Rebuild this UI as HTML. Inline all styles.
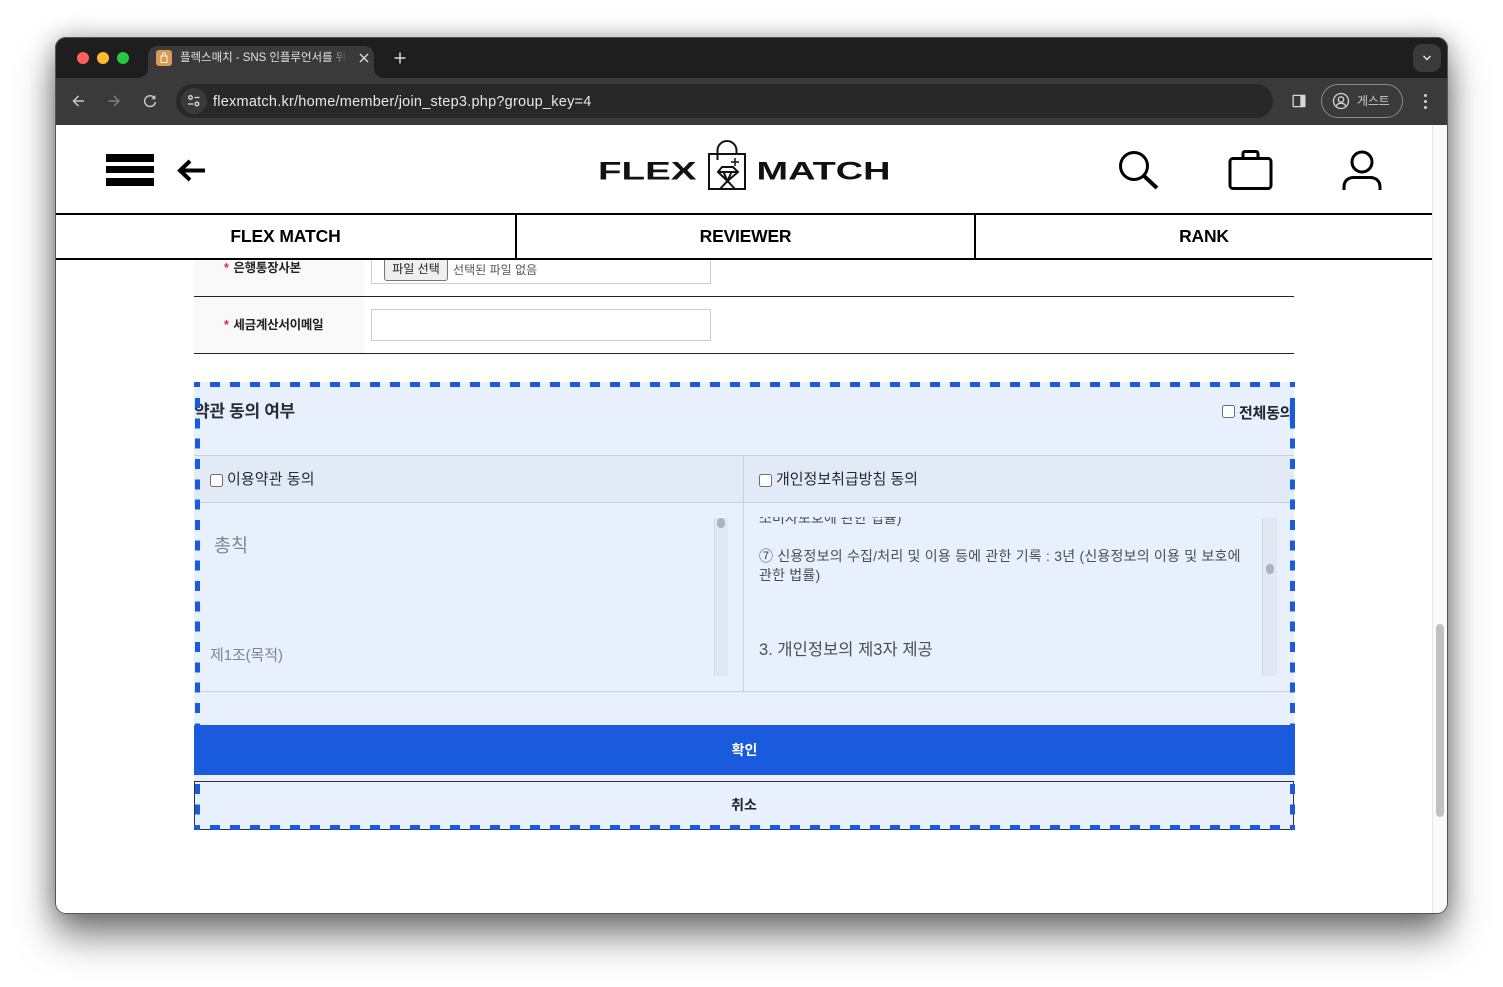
<!DOCTYPE html>
<html lang="ko"><head><meta charset="utf-8"><title>플렉스매치</title>
<style>
*{box-sizing:border-box;margin:0;padding:0}
html,body{width:1503px;height:987px;background:#fff;overflow:hidden;font-family:"Liberation Sans","Noto Sans CJK KR",sans-serif}
.a{position:absolute;white-space:nowrap}
#win{position:absolute;left:55px;top:37px;width:1393px;height:877px;border-radius:11px;background:#fff;box-shadow:0 22px 38px rgba(0,0,0,.5),0 0 24px rgba(0,0,0,.28)}
#frame{position:absolute;left:55px;top:37px;width:1393px;height:877px;border-radius:11px;border:1px solid #555;pointer-events:none}
.cb{position:absolute;width:13px;height:13px;border:1px solid #6e6e6e;border-radius:2.5px;background:#fff}
.line{position:absolute;height:1px}
.dv{position:absolute;width:5px;background:repeating-linear-gradient(180deg,#1a5bde 0 10px,transparent 10px 20.33px)}
.dh{position:absolute;left:194px;width:1101px;height:5px;background:linear-gradient(90deg,#1a5bde 0 10px,transparent 10px 20px) -4px 0/20px 5px repeat-x}
</style></head><body>
<div id="win"></div>

<!-- browser chrome -->
<div class="a" style="left:55px;top:37px;width:1393px;height:41px;background:#1e1e1f;border-radius:11px 11px 0 0"></div>
<div class="a" style="left:56px;top:78px;width:1391px;height:47px;background:#3a3a3b"></div>
<svg class="a" style="left:136px;top:44px" width="260" height="36" viewBox="0 0 260 36"><path d="M0 34C8 34 12 30 12 24V12C12 6 16 2 22 2H228C234 2 238 6 238 12V24C238 30 242 34 250 34Z" fill="#3a3a3b"/></svg>
<div class="a" style="left:77px;top:52px;width:12px;height:12px;border-radius:50%;background:#ff5f57"></div>
<div class="a" style="left:97px;top:52px;width:12px;height:12px;border-radius:50%;background:#febc2e"></div>
<div class="a" style="left:117px;top:52px;width:12px;height:12px;border-radius:50%;background:#28c840"></div>
<div class="a" style="left:156px;top:50px;width:16px;height:16px;border-radius:3px;background:#d99a55"></div>
<svg class="a" style="left:156px;top:50px" width="16" height="16" viewBox="0 0 16 16"><path d="M5 6h6v6.500H5zM6.500 6V4.500a1.500 1.500 0 0 1 3 0V6" fill="none" stroke="#fff3d8" stroke-width="1"/></svg>
<div class="a" style="left:180px;top:50px;width:168px;height:16px;overflow:hidden;font-size:11.500px;line-height:17px;color:#e0e0e0;letter-spacing:-.05px">플렉스매치 - SNS 인플루언서를 위한 플랫폼</div>
<div class="a" style="left:330px;top:48px;width:24px;height:20px;background:linear-gradient(90deg,rgba(58,58,59,0),#3a3a3b 70%)"></div>
<svg class="a" style="left:358px;top:52px" width="12" height="12" viewBox="0 0 12 12"><path d="M2 2l8 8M10 2l-8 8" stroke="#dcdcdc" stroke-width="1.400"/></svg>
<svg class="a" style="left:393px;top:51px" width="14" height="14" viewBox="0 0 14 14"><path d="M7 1.500v11M1.500 7h11" stroke="#d8d8d8" stroke-width="1.500"/></svg>
<div class="a" style="left:1413px;top:44px;width:28px;height:28px;border-radius:9px;background:#3a3a3b"></div>
<svg class="a" style="left:1421px;top:53px" width="12" height="10" viewBox="0 0 12 10"><path d="M2.500 3l3.500 3.500L9.500 3" fill="none" stroke="#e6e6e6" stroke-width="1.500"/></svg>
<svg class="a" style="left:70px;top:92px" width="18" height="18" viewBox="0 0 18 18"><path d="M14 9H3.500M8.500 4L3.500 9l5 5" fill="none" stroke="#c8c8c8" stroke-width="1.500"/></svg>
<svg class="a" style="left:105px;top:92px" width="18" height="18" viewBox="0 0 18 18"><path d="M3.500 9H14M9 4l5 5-5 5" fill="none" stroke="#7d7d7d" stroke-width="1.500"/></svg>
<svg class="a" style="left:141px;top:92px" width="18" height="18" viewBox="0 0 18 18"><path d="M13.800 6.500A5.400 5.400 0 1 0 14.400 10" fill="none" stroke="#c8c8c8" stroke-width="1.500"/><path d="M14.400 3v4.300h-4.300z" fill="#c8c8c8"/></svg>
<div class="a" style="left:176px;top:84px;width:1097px;height:34px;border-radius:17px;background:#282829"></div>
<div class="a" style="left:181px;top:88px;width:26px;height:26px;border-radius:50%;background:#3a3a3b"></div>
<svg class="a" style="left:186px;top:93px" width="16" height="16" viewBox="0 0 16 16"><g fill="none" stroke="#dcdcdc" stroke-width="1.300"><circle cx="4.500" cy="4.500" r="1.800"/><path d="M8.500 4.500h5M2 11h5.500"/><circle cx="11" cy="11" r="1.800"/></g></svg>
<div class="a" style="left:213px;top:93px;font-size:14.500px;line-height:18px;color:#e8e8e8;letter-spacing:.24px">flexmatch.kr/home/member/join_step3.php?group_key=4</div>
<svg class="a" style="left:1291px;top:93px" width="16" height="16" viewBox="0 0 16 16"><rect x="1.500" y="1.700" width="13" height="12.600" rx="1" fill="#d8d8d8"/><rect x="2.800" y="3" width="6.500" height="10" fill="#3a3a3b"/></svg>
<div class="a" style="left:1321px;top:84px;width:82px;height:34px;border-radius:17px;border:1px solid #8b8b8b"></div>
<svg class="a" style="left:1332px;top:92px" width="18" height="18" viewBox="0 0 18 18"><g fill="none" stroke="#d4d4d4" stroke-width="1.300"><circle cx="9" cy="9" r="7.500"/><circle cx="9" cy="7.500" r="2.700"/><path d="M4.300 14c1-2 2.800-2.800 4.700-2.800s3.700.8 4.700 2.800"/></g></svg>
<div class="a" style="left:1357px;top:92px;font-size:12px;line-height:18px;color:#c9c9c9;letter-spacing:-.2px">게스트</div>
<div class="a" style="left:1424px;top:94px;width:3px;height:3px;border-radius:50%;background:#d2d2d2"></div>
<div class="a" style="left:1424px;top:100px;width:3px;height:3px;border-radius:50%;background:#d2d2d2"></div>
<div class="a" style="left:1424px;top:106px;width:3px;height:3px;border-radius:50%;background:#d2d2d2"></div>

<!-- scrollbar -->
<div class="a" style="left:1432px;top:125px;width:15px;height:788px;background:#fafafa;border-left:1px solid #e8e8e8;border-radius:0 0 10px 0"></div>
<div class="a" style="left:1436px;top:624px;width:8px;height:193px;border-radius:4px;background:#c1c1c1"></div>

<!-- form rows -->
<div class="a" style="left:194px;top:260px;width:170px;height:36px;background:#f9f9f9"></div>
<div class="a" style="left:194px;top:297px;width:170px;height:56px;background:#f9f9f9"></div>
<div class="a" style="left:371px;top:256px;width:340px;height:28px;background:#fff;border:1px solid #ccc"></div>
<div class="a" style="left:384px;top:256px;width:64px;height:25px;background:#efefef;border:1px solid #767676;border-radius:3px;font-size:12px;line-height:25px;text-align:center;color:#222">파일 선택</div>
<div class="a" style="left:453px;top:261px;font-size:12px;line-height:18px;color:#555;letter-spacing:.03px">선택된 파일 없음</div>
<div class="a" style="left:224px;top:259px;font-size:12.500px;line-height:18px;font-weight:700;color:#222;letter-spacing:-.25px"><span style="color:#d3275f;margin-right:1.500px">*</span> 은행통장사본</div>
<div class="line" style="left:194px;top:296px;width:1100px;background:#222"></div>
<div class="a" style="left:224px;top:316px;font-size:12.500px;line-height:18px;font-weight:700;color:#222;letter-spacing:-.25px"><span style="color:#d3275f;margin-right:1.500px">*</span> 세금계산서이메일</div>
<div class="a" style="left:371px;top:309px;width:340px;height:32px;background:#fff;border:1px solid #ccc"></div>
<div class="line" style="left:194px;top:353px;width:1100px;background:#222"></div>

<!-- agreement section -->
<div class="a" style="left:194px;top:382px;width:1100px;height:447px;background:#e8f0fe"></div>
<div class="a" style="left:194px;top:401px;font-size:17px;line-height:22px;font-weight:700;color:#2a2d33;letter-spacing:-.3px">약관 동의 여부</div>
<div class="cb" style="left:1222px;top:405px"></div>
<div class="a" style="left:1239px;top:404px;font-size:15px;line-height:20px;font-weight:700;color:#22252b;letter-spacing:-.25px">전체동의</div>
<div class="a" style="left:194px;top:455px;width:1100px;height:48px;background:#e3eaf7;border-top:1px solid #c9d0dd;border-bottom:1px solid #c9d0dd"></div>
<div class="cb" style="left:210px;top:474px"></div>
<div class="a" style="left:227px;top:470px;font-size:15px;line-height:20px;color:#26292f;letter-spacing:.1px">이용약관 동의</div>
<div class="cb" style="left:759px;top:474px"></div>
<div class="a" style="left:776px;top:470px;font-size:15px;line-height:20px;color:#26292f;letter-spacing:-.02px">개인정보취급방침 동의</div>
<div class="a" style="left:743px;top:455px;width:1px;height:237px;background:#c9d0dd"></div>
<div class="line" style="left:194px;top:691px;width:1100px;background:#c9d0dd"></div>

<!-- left terms -->
<div class="a" style="left:214px;top:532px;font-size:18.500px;line-height:27px;color:#80848b">총칙</div>
<div class="a" style="left:210px;top:646px;font-size:15px;line-height:20px;color:#80848b;letter-spacing:-.1px">제1조(목적)</div>
<div class="a" style="left:714px;top:518px;width:14px;height:158px;background:#e2e8f3;border-left:1px solid #d2d8e3"></div>
<div class="a" style="left:717px;top:518px;width:8px;height:10px;border-radius:4px;background:#adb2bb"></div>

<!-- right terms -->
<div class="a" style="left:759px;top:517px;width:480px;height:9px;overflow:hidden"><div style="margin-top:-8px;font-size:14px;line-height:19px;color:#4a4d53;letter-spacing:.1px">소비자보호에 관한 법률)</div></div>
<div class="a" style="left:759px;top:547px;font-size:14px;line-height:19px;color:#4a4d53;letter-spacing:.22px">⑦ 신용정보의 수집/처리 및 이용 등에 관한 기록 : 3년 (신용정보의 이용 및 보호에<br>관한 법률)</div>
<div class="a" style="left:759px;top:639px;font-size:16.500px;line-height:22px;color:#4a4d53;letter-spacing:.03px">3. 개인정보의 제3자 제공</div>
<div class="a" style="left:1262px;top:518px;width:15px;height:158px;background:#e2e8f3;border-left:1px solid #d2d8e3"></div>
<div class="a" style="left:1266px;top:564px;width:8px;height:10px;border-radius:4px;background:#adb2bb"></div>

<!-- buttons -->
<div class="a" style="left:194px;top:725px;width:1101px;height:50px;background:#1a5bde;color:#fff;font-size:14px;font-weight:700;line-height:50px;text-align:center">확인</div>
<div class="a" style="left:194px;top:781px;width:1100px;height:49px;background:#e8f0fe;border:1px solid #2f3339;color:#22252b;font-size:14px;font-weight:700;line-height:46px;text-align:center">취소</div>

<!-- dashed outline -->
<div class="dh" style="top:382px"></div>
<div class="dv" style="left:195px;top:398px;height:327px"></div>
<div class="dv" style="left:1290px;top:398px;height:327px"></div>
<div class="a" style="left:1290px;top:398px;width:5px;height:30px;background:#1a5bde"></div>
<div class="dv" style="left:195px;top:784px;height:31px"></div>
<div class="dv" style="left:1290px;top:784px;height:31px"></div>
<div class="dh" style="top:825px"></div>

<!-- site header (over content) -->
<div class="a" style="left:56px;top:125px;width:1376px;height:135px;background:#fff"></div>
<div class="a" style="left:56px;top:213px;width:1376px;height:2px;background:#000"></div>
<div class="a" style="left:56px;top:258px;width:1376px;height:2px;background:#000"></div>
<div class="a" style="left:515px;top:213px;width:2px;height:47px;background:#000"></div>
<div class="a" style="left:974px;top:213px;width:2px;height:47px;background:#000"></div>
<div class="a" style="left:56px;top:225px;width:459px;text-align:center;font-size:17.500px;line-height:22px;font-weight:700;color:#000;letter-spacing:-.12px">FLEX MATCH</div>
<div class="a" style="left:517px;top:225px;width:457px;text-align:center;font-size:17.500px;line-height:22px;font-weight:700;color:#000;letter-spacing:-.2px">REVIEWER</div>
<div class="a" style="left:976px;top:225px;width:456px;text-align:center;font-size:17.500px;line-height:22px;font-weight:700;color:#000;letter-spacing:-.2px">RANK</div>

<div class="a" style="left:106px;top:154px;width:48px;height:8px;background:#000"></div>
<div class="a" style="left:106px;top:166px;width:48px;height:7px;background:#000"></div>
<div class="a" style="left:106px;top:178px;width:48px;height:8px;background:#000"></div>
<svg class="a" style="left:170px;top:155px" width="40" height="32" viewBox="0 0 40 32"><path d="M35 15.500H11M20 6l-10 9.500L20 25" fill="none" stroke="#000" stroke-width="4"/></svg>

<svg class="a" style="left:590px;top:135px" width="310" height="60" viewBox="0 0 310 60">
<text x="8" y="44.500" font-family="Liberation Sans" font-weight="700" font-size="25" textLength="98.500" lengthAdjust="spacingAndGlyphs" fill="#111">FLEX</text>
<text x="166.500" y="44.500" font-family="Liberation Sans" font-weight="700" font-size="25" textLength="134" lengthAdjust="spacingAndGlyphs" fill="#111">MATCH</text>
<g fill="none" stroke="#111" stroke-width="2">
<path d="M119 19H155V54H119Z"/>
<path d="M127.500 25V15.500a9.500 9.500 0 0 1 19 0V18"/>
<path d="M132 32h11l5 5-10.500 9L128 37zM128 37h20M133.500 37l4 9 4-9"/>
<path d="M130 54l7.500-8 7.500 8" />
<path d="M145 23v8M141 27h8" stroke-width="1.500"/>
</g></svg>

<svg class="a" style="left:1110px;top:140px" width="60" height="60" viewBox="0 0 60 60"><g fill="none" stroke="#000"><circle cx="24" cy="26" r="13.500" stroke-width="3"/><path d="M34 36l13 12" stroke-width="4"/></g></svg>
<svg class="a" style="left:1220px;top:140px" width="60" height="60" viewBox="0 0 60 60"><g fill="none" stroke="#000" stroke-width="3"><rect x="10" y="18.500" width="41" height="30" rx="3"/><path d="M23 18v-4.500a2 2 0 0 1 2-2h11a2 2 0 0 1 2 2V18"/></g></svg>
<svg class="a" style="left:1332px;top:140px" width="60" height="60" viewBox="0 0 60 60"><g fill="none" stroke="#000" stroke-width="3"><circle cx="30" cy="22" r="10"/><path d="M12 50v-3c0-6 4-9.500 10-9.500h16c6 0 10 3.500 10 9.500v3"/></g></svg>

<div id="frame"></div>
</body></html>
